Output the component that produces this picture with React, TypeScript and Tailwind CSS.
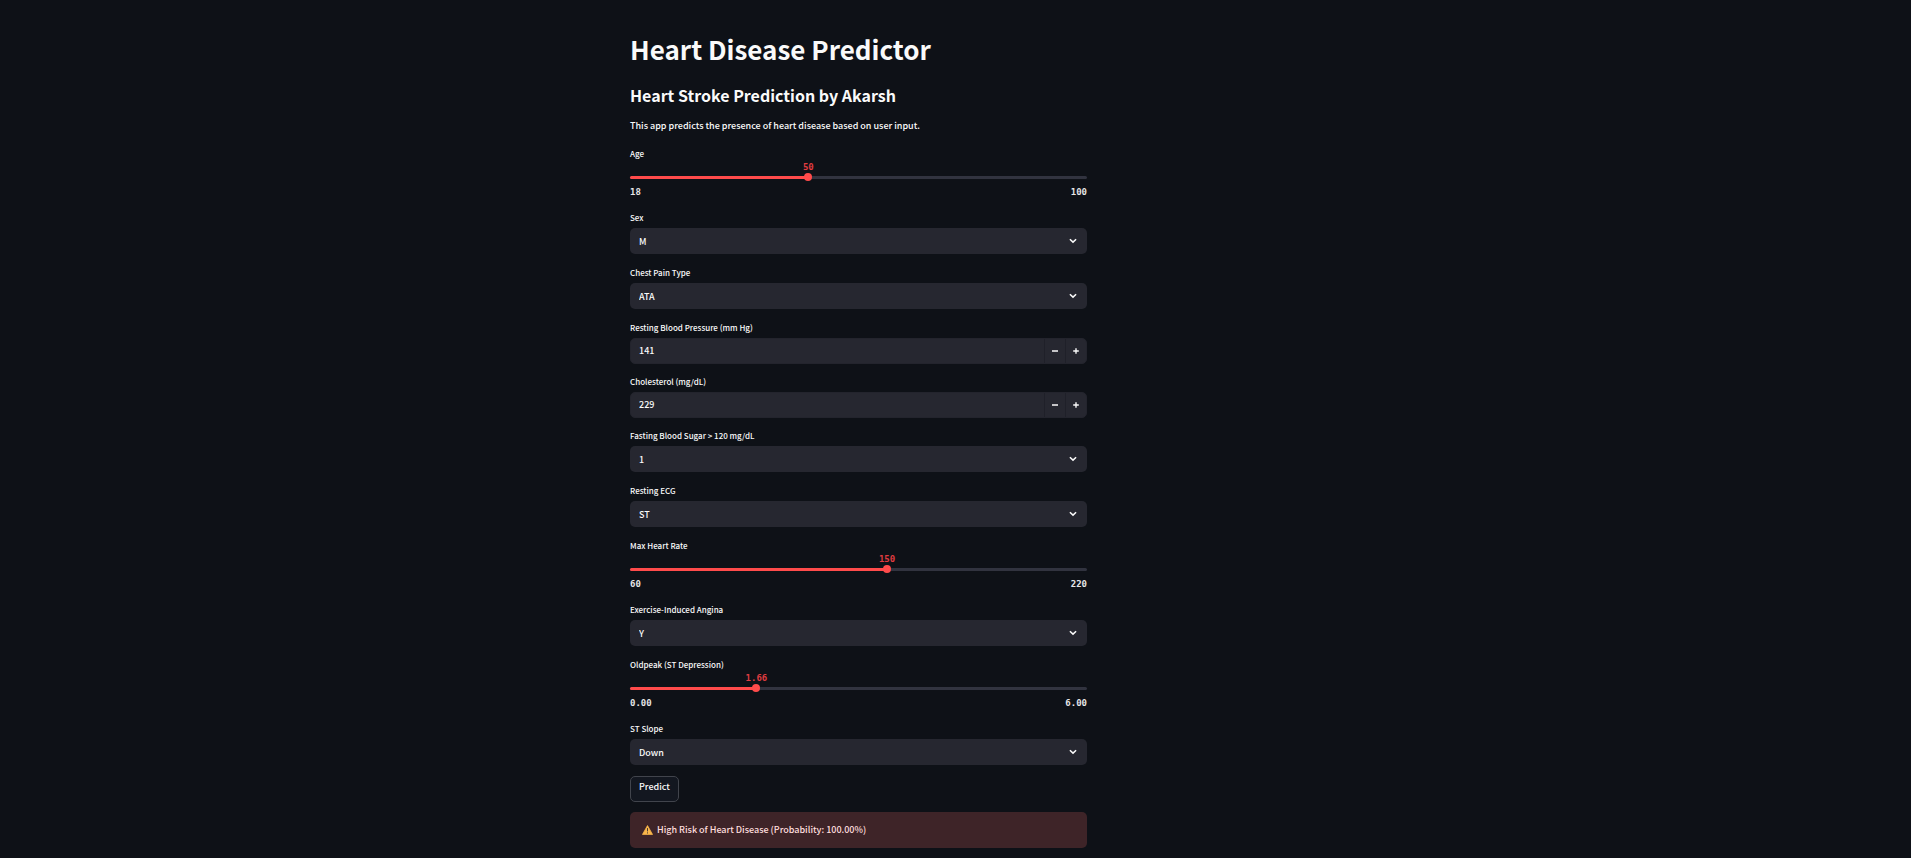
import { useState } from 'react';
import type { ReactNode } from 'react';

const ROW = 'flex flex-col';

function Label({ id, children }: { id: string; children: ReactNode }) {
  return (
    <label htmlFor={id} className="h-[18px] text-[8px] font-medium leading-[16px]">
      {children}
    </label>
  );
}

type SliderProps = { id: string; label: string; min: number; max: number; step: number; initial: number; digits?: number };

function SliderField({ id, label, min, max, step, initial, digits = 0 }: SliderProps) {
  const [value, setValue] = useState(initial);
  const pct = ((value - min) / (max - min)) * 100;
  return (
    <div className={`${ROW} h-16`}>
      <Label id={id}>{label}</Label>
      <div className="relative mt-[11px] h-[6px]">
        <input
          id={id}
          type="range"
          min={min}
          max={max}
          step={step}
          value={value}
          onChange={(e) => setValue(Number(e.target.value))}
          className="absolute inset-0 z-10 m-0 w-full cursor-pointer opacity-0"
        />
        <div className="absolute inset-x-0 top-px h-[3px] rounded-full bg-[#31333f]" />
        <div className="absolute left-0 top-px h-[3px] rounded-full bg-[#ff4b4b]" style={{ width: `${pct}%` }} />
        <div className="absolute -top-[2px] size-2 -translate-x-1/2 rounded-full bg-[#ff4b4b]" style={{ left: `${pct}%` }} />
        <output
          htmlFor={id}
          className="absolute -top-[14px] -translate-x-1/2 font-['DejaVu_Sans_Mono','Liberation_Mono',monospace] text-[9px] font-bold leading-[12px] text-[#e03c40]"
          style={{ left: `${pct}%` }}
        >
          {value.toFixed(digits)}
        </output>
      </div>
      <div className="mt-1 flex justify-between font-['DejaVu_Sans_Mono','Liberation_Mono',monospace] text-[9px] font-bold leading-[14px] text-[#e6e6e8]">
        <span>{min.toFixed(digits)}</span>
        <span>{max.toFixed(digits)}</span>
      </div>
    </div>
  );
}

function SelectField({ id, label, options, initial }: { id: string; label: string; options: string[]; initial: string }) {
  return (
    <div className={`${ROW} h-[55px]`}>
      <Label id={id}>{label}</Label>
      <div className="relative">
        <select
          id={id}
          defaultValue={initial}
          className="block h-[26px] w-full appearance-none rounded-[5px] bg-[#262730] px-[9px] pt-px text-[9px] font-medium leading-[26px] outline-none"
        >
          {options.map((o) => (
            <option key={o}>{o}</option>
          ))}
        </select>
        <svg
          viewBox="0 0 8 8"
          className="pointer-events-none absolute right-[10px] top-[9px] size-2"
          fill="none"
          stroke="#fafafa"
          strokeWidth="1.5"
        >
          <path d="M0.9 2.2 4 5.1 7.1 2.2" />
        </svg>
      </div>
    </div>
  );
}

function NumberField({ id, label, initial }: { id: string; label: string; initial: number }) {
  const [value, setValue] = useState(String(initial));
  const bump = (d: number) => setValue((v) => String(Number(v) + d));
  return (
    <div className={`${ROW} h-[54px]`}>
      <Label id={id}>{label}</Label>
      <div className="flex h-[26px] overflow-hidden rounded-[5px] border border-[#23242d] bg-[#262730]">
        <input
          id={id}
          type="text"
          inputMode="numeric"
          value={value}
          onChange={(e) => setValue(e.target.value)}
          className="min-w-0 flex-1 bg-transparent px-2 text-[9px] font-medium outline-none"
        />
        <button
          type="button"
          aria-label={`Decrease ${label}`}
          onClick={() => bump(-1)}
          className="flex w-[21px] items-center justify-center border-l border-[#1f2029]"
        >
          <svg viewBox="0 0 6 6" className="size-[6px]" fill="none" stroke="#fafafa" strokeWidth="1.4">
            <path d="M0 3h6" />
          </svg>
        </button>
        <button
          type="button"
          aria-label={`Increase ${label}`}
          onClick={() => bump(1)}
          className="flex w-[21px] items-center justify-center border-l border-[#1f2029]"
        >
          <svg viewBox="0 0 6 6" className="size-[6px]" fill="none" stroke="#fafafa" strokeWidth="1.4">
            <path d="M0.2 3h5.6M3 0.2v5.6" />
          </svg>
        </button>
      </div>
    </div>
  );
}

export default function App() {
  return (
    <div className="flex min-h-screen justify-center bg-[#0e1117] pr-[194px] font-['Noto_Sans_CJK_SC',sans-serif] text-[#fafafa]">
      <main className="w-full max-w-[457px] pb-[9px] pt-[31px]">
        <h1 className="text-[26px] font-bold leading-9">Heart Disease Predictor</h1>
        <h2 className="mt-3 text-[16px] font-bold leading-8">Heart Stroke Prediction by Akarsh</h2>
        <p className="mb-[7px] mt-[6px] text-[9px] font-medium leading-[18px]">
          This app predicts the presence of heart disease based on user input.
        </p>
        <form className="flex flex-col pt-1" onSubmit={(e) => e.preventDefault()}>
          <SliderField id="age" label="Age" min={18} max={100} step={1} initial={50} />
          <SelectField id="sex" label="Sex" options={['M', 'F']} initial="M" />
          <SelectField id="chest" label="Chest Pain Type" options={['ATA', 'NAP', 'TA', 'ASY']} initial="ATA" />
          <NumberField id="bp" label="Resting Blood Pressure (mm Hg)" initial={141} />
          <NumberField id="chol" label="Cholesterol (mg/dL)" initial={229} />
          <SelectField id="sugar" label="Fasting Blood Sugar > 120 mg/dL" options={['0', '1']} initial="1" />
          <SelectField id="ecg" label="Resting ECG" options={['Normal', 'ST', 'LVH']} initial="ST" />
          <SliderField id="rate" label="Max Heart Rate" min={60} max={220} step={1} initial={150} />
          <SelectField id="angina" label="Exercise-Induced Angina" options={['Y', 'N']} initial="Y" />
          <SliderField id="oldpeak" label="Oldpeak (ST Depression)" min={0} max={6} step={0.01} initial={1.66} digits={2} />
          <SelectField id="slope" label="ST Slope" options={['Up', 'Flat', 'Down']} initial="Down" />
          <button
            type="submit"
            className="h-[26px] self-start rounded-[5px] border border-[#41444c] bg-[#131720] px-2 pb-1 text-[9px] font-medium leading-[18px]"
          >
            Predict
          </button>
        </form>
        <div role="alert" className="mt-[10px] flex h-9 items-center rounded-[5px] bg-[#3e2428] px-3 pb-px text-[9px] font-medium text-[#ffdede]">
          <svg viewBox="0 0 12 11" className="mr-1 h-[10px] w-[11px]">
            <path d="M6 0.6 11.6 10.4H0.4Z" fill="#f9b64b" stroke="#f9b64b" strokeWidth="0.8" strokeLinejoin="round" />
            <path d="M6 3.4v3.6M6 8.1v1.2" stroke="#4a3a34" strokeWidth="1.1" />
          </svg>
          High Risk of Heart Disease (Probability: 100.00%)
        </div>
      </main>
    </div>
  );
}
